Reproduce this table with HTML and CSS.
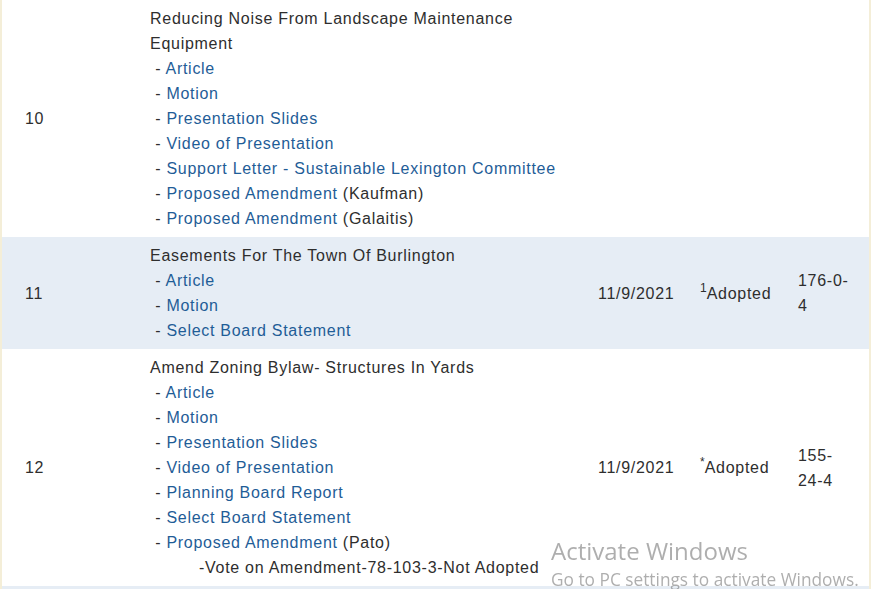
FILE: index.html
```html
<!DOCTYPE html>
<html>
<head>
<meta charset="utf-8">
<link rel="stylesheet" href="styles.css">
</head>
<body>
<div class="page">
<table class="articles">
  <colgroup>
    <col class="c-num"><col class="c-title"><col class="c-date"><col class="c-result"><col class="c-vote">
  </colgroup>
  <tbody>
    <tr>
      <td class="num">10</td>
      <td class="title">Reducing Noise From Landscape Maintenance Equipment<br>
        &nbsp;- <a href="#">Article</a><br>
        &nbsp;- <a href="#">Motion</a><br>
        &nbsp;- <a href="#">Presentation Slides</a><br>
        &nbsp;- <a href="#">Video of Presentation</a><br>
        &nbsp;- <a href="#">Support Letter - Sustainable Lexington Committee</a><br>
        &nbsp;- <a href="#">Proposed Amendment</a> (Kaufman)<br>
        &nbsp;- <a href="#">Proposed Amendment</a> (Galaitis)
      </td>
      <td class="date"></td>
      <td class="result"></td>
      <td class="vote"></td>
    </tr>
    <tr class="alt">
      <td class="num">11</td>
      <td class="title">Easements For The Town Of Burlington<br>
        &nbsp;- <a href="#">Article</a><br>
        &nbsp;- <a href="#">Motion</a><br>
        &nbsp;- <a href="#">Select Board Statement</a>
      </td>
      <td class="date">11/9/2021</td>
      <td class="result"><sup>1</sup>Adopted</td>
      <td class="vote">176-0-4</td>
    </tr>
    <tr>
      <td class="num">12</td>
      <td class="title">Amend Zoning Bylaw- Structures In Yards<br>
        &nbsp;- <a href="#">Article</a><br>
        &nbsp;- <a href="#">Motion</a><br>
        &nbsp;- <a href="#">Presentation Slides</a><br>
        &nbsp;- <a href="#">Video of Presentation</a><br>
        &nbsp;- <a href="#">Planning Board Report</a><br>
        &nbsp;- <a href="#">Select Board Statement</a><br>
        &nbsp;- <a href="#">Proposed Amendment</a> (Pato)
        <div class="sub">-Vote on Amendment-78-103-3-Not Adopted</div>
      </td>
      <td class="date">11/9/2021</td>
      <td class="result"><sup>*</sup>Adopted</td>
      <td class="vote">155-24-4</td>
    </tr>
    <tr class="alt spacer">
      <td class="num"></td>
      <td class="title"></td>
      <td class="date"></td>
      <td class="result"></td>
      <td class="vote"></td>
    </tr>
  </tbody>
</table>
</div>
<div class="activate">
  <div class="act-title">Activate Windows</div>
  <div class="act-sub">Go to PC settings to activate Windows.</div>
</div>
</body>
</html>
```

FILE: styles.css
```css
html, body {
  margin: 0;
  padding: 0;
  background: #f4eed8;
  overflow: hidden;
}
.page {
  margin: 0 2px 0 2px;
  background: #ffffff;
}
.articles {
  width: 867px;
  border-collapse: collapse;
  table-layout: fixed;
  font-family: "Liberation Sans", Arial, sans-serif;
  font-size: 16px;
  letter-spacing: 0.72px;
  line-height: 25px;
  color: #2e2e2e;
}
.c-num { width: 138px; }
.c-title { width: 448px; }
.c-date { width: 102px; }
.c-result { width: 98px; }
.c-vote { width: 81px; }
.articles td {
  padding: 6px 0 6px 10px;
  vertical-align: middle;
}
.articles td.num { padding-left: 23px; }
.articles td.title { padding-right: 18px; }
.articles td.vote { padding-right: 13px; }
.articles tr.alt td { background: #e6edf5; }
.articles tr.spacer td { height: 20px; }
.articles a {
  color: #1f5d97;
  text-decoration: none;
}
.articles sup {
  font-size: 12px;
  line-height: 0;
  vertical-align: 7px;
  margin-right: 0;
  letter-spacing: 0;
}
.sub { padding-left: 49px; }
.activate {
  position: fixed;
  left: 551px;
  top: 536px;
  font-family: "Open Sans", "Noto Sans", sans-serif;
  color: rgba(120, 120, 120, 0.6);
}
.act-title {
  font-size: 24px;
  line-height: 30px;
}
.act-sub {
  font-size: 17.3px;
  line-height: 28px;
}
```
